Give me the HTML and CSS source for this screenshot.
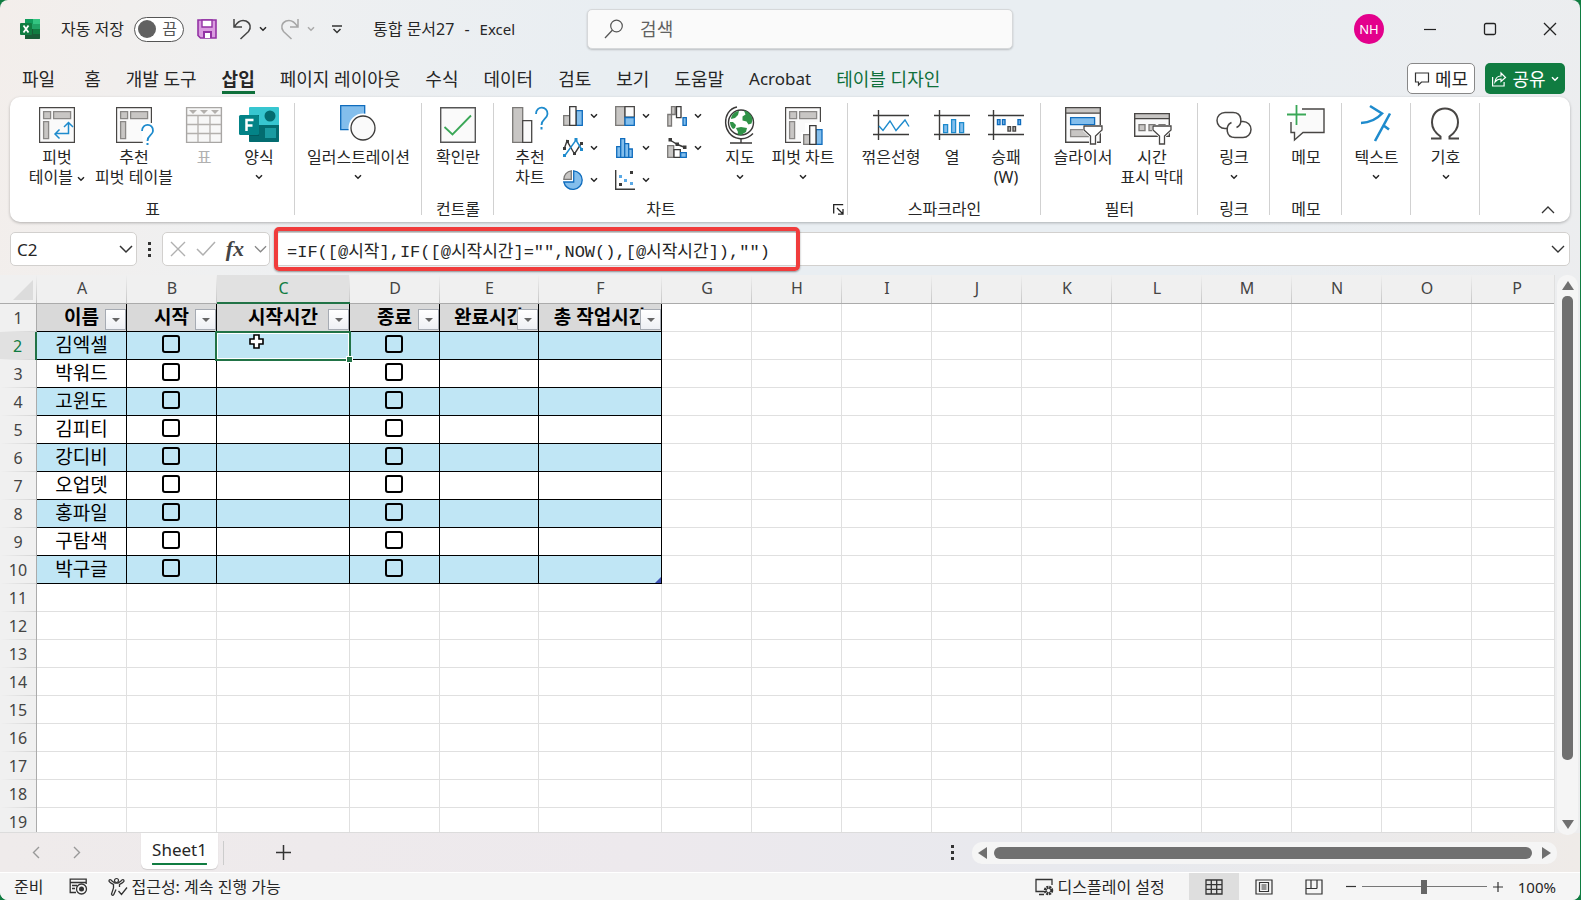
FILE: index.html
```html
<!DOCTYPE html>
<html lang="ko">
<head>
<meta charset="utf-8">
<title>통합 문서27 - Excel</title>
<link rel="stylesheet" href="styles.css">
</head>
<body>
<svg class="defs" aria-hidden="true">
  <symbol id="chev" viewBox="0 0 8 8"><path d="M1 2.2 4 5.2 7 2.2" fill="none" stroke="currentColor" stroke-width="1.5"/></symbol>
  <symbol id="pivot" viewBox="0 0 40 40">
    <path d="M2.6 2.6h34.8v34.8H2.6z" fill="#fafafa" stroke="#484644" stroke-width="1.2"/>
    <path d="M6.6 6.6h7v7h-7zM16.6 6.6h17v7h-17zM6.6 16.6h5v17h-5z" fill="#c8c6c4" stroke="#8a8886" stroke-width="1.3"/>
  </symbol>
  <symbol id="axes" viewBox="0 0 40 40"><path d="M2 10.5h36M2 29.5h36M7.5 5v30" fill="none" stroke="#3b3a39" stroke-width="1.4"/></symbol>
  <symbol id="funnel" viewBox="0 0 20 20"><path d="M1 1h18v4l-6.500 6v8h-5v-8L1 5z" fill="#fff" stroke="#fff" stroke-width="3"/><path d="M1 1h18v4l-6.500 6v8h-5v-8L1 5z" fill="#fff" stroke="#484644" stroke-width="1.300"/></symbol>
</svg>

<div class="window">
<header class="titlebar">
  <svg class="logo" viewBox="0 0 20 20" role="img" aria-label="Excel"><path d="M5 0h14a1 1 0 0 1 1 1v18a1 1 0 0 1-1 1H5z" fill="#21a366"/><path d="M5 0h8v5H5z" fill="#109c5c"/><path d="M13 0h7v5h-7z" fill="#33c481"/><path d="M5 10h8v5H5z" fill="#185c37"/><path d="M13 10h7v5h-7z" fill="#107c41"/><path d="M5 15h15v4a1 1 0 0 1-1 1H5z" fill="#185c37"/><rect x="0" y="4" width="12" height="12" rx="1" fill="#107c41"/><path d="m3.500 6.500 5 7m0-7-5 7" stroke="#fff" stroke-width="1.800"/></svg>
  <div class="autosave"><span id="as">자동 저장</span><button class="toggle" role="switch" aria-checked="false" aria-labelledby="as"><i></i>끔</button></div>
  <button class="bare save" aria-label="저장"><svg width="20" height="20" viewBox="0 0 20 20"><path d="M1 1h18v18H3.500L1 16.500z" fill="#da9be0" stroke="#9332a4" stroke-width="1.600"/><path d="M5 1h10v7H5z" fill="#fff" stroke="#9332a4" stroke-width="1.400"/><path d="M6 12h9v7H6z" fill="#9332a4"/><path d="M8 14h5v5H8z" fill="#fff"/></svg></button>
  <button class="bare undo" aria-label="실행 취소"><svg width="20" height="22" viewBox="0 0 20 22"><path d="M2 1v8h8M2.500 8.500C6 3 10 1.500 14 3c4.500 2 5.500 7 2.500 10.500L8.500 21" fill="none" stroke="#444" stroke-width="1.500"/></svg><svg class="c"><use href="#chev"/></svg></button>
  <button class="bare undo redo" aria-label="다시 실행"><svg width="20" height="22" viewBox="0 0 20 22"><path d="M18 1v8h-8M17.500 8.500C14 3 10 1.500 6 3 1.500 5 .5 10 3.500 13.500L11.500 21" fill="none" stroke="#a6a6a6" stroke-width="1.500"/></svg><svg class="c"><use href="#chev"/></svg></button>
  <button class="bare custom" aria-label="빠른 실행 도구 모음 사용자 지정"><svg width="10" height="9" viewBox="0 0 10 9"><path d="M0 1h10M1.500 4 5 7.500 8.500 4" fill="none" stroke="#333" stroke-width="1.500"/></svg></button>
  <h1 class="doc">통합 문서27<span>-</span><span class="latin">Excel</span></h1>
  <label class="search"><svg width="20" height="20" viewBox="0 0 20 20"><circle cx="12.500" cy="7" r="5.800" fill="none" stroke="#555" stroke-width="1.200"/><path d="M8.300 11.300 1 19" stroke="#555" stroke-width="1.300"/></svg><input type="text" placeholder="검색" aria-label="검색"></label>
  <div class="caption">
    <button class="bare avatar" aria-label="계정">NH</button>
    <button class="bare" aria-label="최소화"><svg width="14" height="14"><path d="M1 7.500h12" stroke="#222" stroke-width="1.200"/></svg></button>
    <button class="bare" aria-label="최대화"><svg width="14" height="14"><rect x="1.500" y="1.500" width="11" height="11" rx="1.500" fill="none" stroke="#222" stroke-width="1.300"/></svg></button>
    <button class="bare" aria-label="닫기"><svg width="14" height="14"><path d="m1 1 12 12M13 1 1 13" stroke="#222" stroke-width="1.300"/></svg></button>
  </div>
</header>

<nav class="tabs">
  <button>파일</button><button>홈</button><button>개발 도구</button><button class="on">삽입</button><button>페이지 레이아웃</button><button>수식</button><button>데이터</button><button>검토</button><button>보기</button><button>도움말</button><button class="latin">Acrobat</button><button class="ctx">테이블 디자인</button>
  <div class="share-row">
    <button class="memo"><svg width="16" height="16" viewBox="0 0 16 16"><path d="M1.500 2h13v9H7.500L4.500 14v-3h-3z" fill="none" stroke="#333" stroke-width="1.200"/></svg>메모</button>
    <button class="share"><svg width="16" height="16" viewBox="0 0 16 16"><path d="M1.600 6v9h11.500v-4M4 11c.5-4 2.500-6 6-6V2l4.500 4.500L10 10.500V8C7.500 8 5.500 9 4 11z" fill="none" stroke="#fff" stroke-width="1.200"/></svg>공유<svg class="c"><use href="#chev"/></svg></button>
  </div>
</nav>

<main class="ribbon">
  <section class="group g-table">
    <div class="tools">
      <button class="tool w68"><svg class="ico" viewBox="0 0 40 40"><use href="#pivot"/><path d="M20 28.500h12.500V18M28 22l4.500-4.500L37 22M23.500 24.500l-4.500 4.500 4.500 4.500" fill="none" stroke="#1e8bcd" stroke-width="1.500" transform="translate(-1 0)"/></svg><span>피벗<br>테이블 <svg class="c"><use href="#chev"/></svg></span></button>
      <button class="tool w86"><svg class="ico" viewBox="0 0 40 40"><use href="#pivot"/><path d="M27 18h12v22H29z" fill="#fff"/><path d="M28 26c0-8.500 11.500-8 11 0-.3 4.500-5.500 4-5.500 10" fill="none" stroke="#1e8bcd" stroke-width="1.800"/><path d="M32.500 38h2v2h-2z" fill="#1e8bcd"/></svg><span>추천<br>피벗 테이블</span></button>
      <button class="tool w54" disabled><svg class="ico" viewBox="0 0 40 40"><path d="M2.600 2.600h34.800v34.800H2.600z" fill="#f7f7f7" stroke="#a8a6a4" stroke-width="1.400"/><path d="M3 10.500h34M3 19.500h34M3 28.500h34M14 10.500V37M26 10.500V37" stroke="#b3b0ad" stroke-width="1.300"/><path d="M5 5h8l-4 4zM16 5h8l-4 4zM27 5h8l-4 4z" fill="#b3b0ad"/></svg><span>표</span></button>
      <button class="tool w56"><svg class="ico" viewBox="0 0 40 40"><path d="M11 2h28a1 1 0 0 1 1 1v33a1 1 0 0 1-1 1H11a1 1 0 0 1-1-1V3a1 1 0 0 1 1-1z" fill="#37c6d0"/><path d="M10 20h30v16a1 1 0 0 1-1 1H11a1 1 0 0 1-1-1z" fill="#036c70"/><path d="M10 10h10v21H10z" fill="#025a5e"/><circle cx="31" cy="11" r="5.500" fill="#036c70"/><path d="M26 23h11v10H26z" fill="#1a9ba1"/><rect x="0" y="10" width="20" height="20" rx="1.500" fill="#038387"/><path d="M7.500 26V15h7M7.500 20.500h6" fill="none" stroke="#fff" stroke-width="2.500"/></svg><span>양식</span><svg class="c"><use href="#chev"/></svg></button>
    </div><h2>표</h2>
  </section>
  <section class="group g-ill">
    <div class="tools mid"><button class="tool"><svg class="ico" viewBox="0 0 40 40"><path d="M2.700.7h24v24h-24z" fill="#83beec" stroke="#0f6cbd" stroke-width="1.300"/><circle cx="25" cy="23" r="14.500" fill="#fff"/><circle cx="25" cy="23" r="12" fill="#fafafa" stroke="#3b3a39" stroke-width="1.300"/></svg><span>일러스트레이션</span><svg class="c"><use href="#chev"/></svg></button></div>
  </section>
  <section class="group g-72">
    <div class="tools mid"><button class="tool"><svg class="ico" viewBox="0 0 40 40"><path d="M2.700 2.700h34.600v34.600H2.700z" fill="#fafafa" stroke="#555" stroke-width="1.400"/><path d="m6.500 22 8 7.500L33 10.500" fill="none" stroke="#3aa757" stroke-width="1.800"/></svg><span>확인란</span></button></div><h2>컨트롤</h2>
  </section>
  <section class="group g-chart">
    <div class="tools">
      <button class="tool w52"><svg class="ico" viewBox="0 0 40 40"><path d="M2.700 2.700h10v34.600h-10z" fill="#c8c6c4" stroke="#7a7876" stroke-width="1.300"/><path d="M12.700 15.700h9v21.600h-9z" fill="#fafafa" stroke="#484644" stroke-width="1.300"/><path d="M26 9c0-9 12-8 11.500 0-.3 5-6 5-6 11" fill="none" stroke="#1e8bcd" stroke-width="1.800"/><path d="M30.500 22h2v2.500h-2z" fill="#1e8bcd"/></svg><span>추천<br>차트</span></button>
      <div class="minis">
        <button class="mini" aria-label="세로 막대형 차트"><svg class="m" viewBox="0 0 20 20"><path d="M.7 9.700h6v9.600h-6z" fill="#c8c6c4" stroke="#7a7876" stroke-width="1.300"/><path d="M13.300 4.700h6v14.600h-6z" fill="#83beec" stroke="#0f6cbd" stroke-width="1.300"/><path d="M6.700.7h6.300v18.600H6.700z" fill="#fafafa" stroke="#3b3a39" stroke-width="1.300"/></svg><svg class="c"><use href="#chev"/></svg></button>
        <button class="mini" aria-label="계층 구조 차트"><svg class="m" viewBox="0 0 20 20"><path d="M.7.7h9v18.600h-9z" fill="#c8c6c4" stroke="#7a7876" stroke-width="1.300"/><path d="M10 .7h9.300v10.500H10z" fill="#fafafa" stroke="#484644" stroke-width="1.300"/><path d="M10 11.500h9.300v7.800H10z" fill="#83beec" stroke="#0f6cbd" stroke-width="1.300"/></svg><svg class="c"><use href="#chev"/></svg></button>
        <button class="mini" aria-label="폭포 차트"><svg class="m" viewBox="0 0 20 20"><path d="M.8 8.500h3.700V20H.8zM4.500.7h3.700v7.800H4.500z" fill="#c8c6c4" stroke="#7a7876" stroke-width="1.300"/><path d="M9.500.7h4.500v11H9.500z" fill="#fff" stroke="#3b3a39" stroke-width="1.300"/><path d="M16 11.700h3.300v7.600H16z" fill="#83beec" stroke="#0f6cbd" stroke-width="1.300"/></svg><svg class="c"><use href="#chev"/></svg></button>
        <button class="mini" aria-label="꺾은선형 차트"><svg class="m" viewBox="0 0 20 20"><path d="M1.500 10 4 3l7.500 13L18.500 5" fill="none" stroke="#3b3a39" stroke-width="1.400"/><path d="M1.500 18 13 2l6 10" fill="none" stroke="#1e8bcd" stroke-width="1.500"/><path d="M0 9h3v3H0zM3 2h3v3H3zM10 14h3v3h-3zM17 4h3v3h-3z" fill="#3b3a39"/><path d="M0 16h3v3H0zM11.500 0h3v3h-3zM17 10h3v3h-3z" fill="#1e8bcd"/></svg><svg class="c"><use href="#chev"/></svg></button>
        <button class="mini" aria-label="통계 차트"><svg class="m" viewBox="0 0 20 20"><path d="M1.700 8.700h4v10.600h-4zM5.700.7h4v18.600h-4zM9.700 5.700h4v13.600h-4zM13.700 11h3.600v8.300h-3.600z" fill="#83beec" stroke="#0f6cbd" stroke-width="1.300"/></svg><svg class="c"><use href="#chev"/></svg></button>
        <button class="mini" aria-label="콤보 차트"><svg class="m" viewBox="0 0 20 20"><path d="M.7 7.700h6v11.600h-6z" fill="#c8c6c4" stroke="#7a7876" stroke-width="1.300"/><path d="M7 11.700h6.300v7.600H7z" fill="#fff" stroke="#3b3a39" stroke-width="1.300"/><path d="M13.700 14.700h5.600v4.600h-5.600z" fill="#83beec" stroke="#0f6cbd" stroke-width="1.300"/><path d="m3 2 7.500 4.500L18 9.500" fill="none" stroke="#3b3a39" stroke-width="1.400"/><path d="M1.500 0h3.500v3.500H1.500zM8.500 4.500H12V8H8.500zM16 7.500h3.500V11H16z" fill="#3b3a39"/></svg><svg class="c"><use href="#chev"/></svg></button>
        <button class="mini" aria-label="원형 차트"><svg class="m" viewBox="0 0 20 20"><path d="M10.700.8A9.300 9.300 0 1 1 .8 12h9.900z" fill="#83beec" stroke="#0f6cbd" stroke-width="1.300"/><path d="M8.300.8v8.500H.8A8.500 8.500 0 0 1 8.300.8z" fill="#c8c6c4" stroke="#7a7876" stroke-width="1.300"/></svg><svg class="c"><use href="#chev"/></svg></button>
        <button class="mini" aria-label="분산형 차트"><svg class="m" viewBox="0 0 20 20"><path d="M.7 0v19.300H20" fill="none" stroke="#3b3a39" stroke-width="1.400"/><path d="M15 1h3v3h-3zM4 13h3v3H4z" fill="#3b3a39"/><path d="M4 5h3v3H4zM9 9h3v3H9zM15 12h3v3h-3z" fill="#5aa9e6"/></svg><svg class="c"><use href="#chev"/></svg></button>
      </div>
      <button class="tool w56"><svg class="ico" viewBox="0 0 40 40"><circle cx="21" cy="17.500" r="12.500" fill="#fff" stroke="#3b3a39" stroke-width="1.400"/><path d="M13 9c2-2 4-3 6-3l-1 4-3 3-4 1c0-2 1-4 2-5zM24 5.500c5 1 8 5 8.500 9l-1 4-3 1-2-3-4-1 0-4 3-2zM10 17l3 0 3 3-1 3-2 1c-2-2-3-4-3-7zM16 23l5-1 6 1-1 4-5 3c-3 0-4-1-3-3z" fill="#2f9247"/><path d="M17 2C1 5 2 31 19 33.500c5 .8 10-.8 14-5M21 33.500V38M10 38h22" fill="none" stroke="#3b3a39" stroke-width="1.400"/></svg><span>지도</span><svg class="c"><use href="#chev"/></svg></button>
      <button class="tool w70"><svg class="ico" viewBox="0 0 40 40"><use href="#pivot"/><path d="M18 27h4v-9h5v-1h13v23H18z" fill="#fff"/><path d="M20.700 29.700h6v9.600h-6z" fill="#c8c6c4" stroke="#7a7876" stroke-width="1.300"/><path d="M33 24.700h6v14.600h-6z" fill="#83beec" stroke="#0f6cbd" stroke-width="1.300"/><path d="M26.700 20.700h6.300v18.600h-6.300z" fill="#fafafa" stroke="#3b3a39" stroke-width="1.300"/></svg><span>피벗 차트</span><svg class="c"><use href="#chev"/></svg></button>
    </div><h2>차트</h2>
    <button class="bare launcher" aria-label="모든 차트 보기"><svg width="11" height="11" viewBox="0 0 11 11"><path d="M.7 9.500V.7h9.500M4 4l5.500 5.500M10 5v5.200H5" fill="none" stroke="#222" stroke-width="1.300"/></svg></button>
  </section>
  <section class="group g-spark">
    <div class="tools">
      <button class="tool w68"><svg class="ico" viewBox="0 0 40 40"><use href="#axes"/><path d="m8 21 4 4.500L19 16l6 9.500L34 15l4 6.500" fill="none" stroke="#1e8bcd" stroke-width="1.400"/></svg><span>꺾은선형</span></button>
      <button class="tool w54"><svg class="ico" viewBox="0 0 40 40"><use href="#axes"/><path d="M11.600 19.600h4v8h-4zM19.600 14.600h4v13h-4zM27.600 17.600h4v10h-4z" fill="#83beec" stroke="#1e8bcd" stroke-width="1.300"/></svg><span>열</span></button>
      <button class="tool w54"><svg class="ico" viewBox="0 0 40 40"><use href="#axes"/><path d="M11.500 14.600h2.500v5h-2.500zM16.500 14.600H19v5h-2.500zM32 14.600h2.500v5H32z" fill="#83beec" stroke="#0f6cbd" stroke-width="1.400"/><path d="M22 21.600h2.500v4.500H22zM27 21.600h2.500v4.500H27z" fill="#c8c6c4" stroke="#484644" stroke-width="1.400"/></svg><span>승패<br>(W)</span></button>
    </div><h2>스파크라인</h2>
  </section>
  <section class="group g-filter">
    <div class="tools">
      <button class="tool w70"><svg class="ico" viewBox="0 0 40 40"><path d="M2.700 2.700h34.600v34.600H2.700z" fill="#fafafa" stroke="#484644" stroke-width="1.400"/><path d="M2.700 2.700h34.600v5.500H2.700z" fill="#c8c6c4" stroke="#484644" stroke-width="1.300"/><path d="M7.600 12.600h24v7h-24z" fill="#83beec" stroke="#0f6cbd" stroke-width="1.300"/><path d="M7.600 24.600h24v7h-24z" fill="#c8c6c4" stroke="#8a8886" stroke-width="1.300"/><use href="#funnel" x="20" y="20" width="20" height="20"/></svg><span>슬라이서</span></button>
      <button class="tool w68"><svg class="ico" viewBox="0 0 40 40"><path d="M2.700 8.700h34.600v22.600H2.700z" fill="#fafafa" stroke="#484644" stroke-width="1.400"/><path d="M2.700 8.700h34.600v5H2.700z" fill="#c8c6c4" stroke="#484644" stroke-width="1.300"/><path d="M7 19.600h6v6H7zM17 19.600h6v6h-6zM27 19.600h6v6h-6z" fill="#c8c6c4" stroke="#7a7876" stroke-width="1.300"/><use href="#funnel" x="20" y="20" width="20" height="20"/></svg><span>시간<br>표시 막대</span></button>
    </div><h2>필터</h2>
  </section>
  <section class="group g-72"><div class="tools mid"><button class="tool"><svg class="ico" viewBox="0 0 40 40"><path d="M14 23.500h-3a8 8 0 0 1 0-16h8c9.500 0 10 12 3.500 15" fill="none" stroke="#484644" stroke-width="1.500"/><path d="M26 16.500h3a8 8 0 0 1 0 16h-8c-9.500 0-10-12-3.500-15" fill="none" stroke="#484644" stroke-width="1.500"/></svg><span>링크</span><svg class="c"><use href="#chev"/></svg></button></div><h2>링크</h2></section>
  <section class="group g-72"><div class="tools mid"><button class="tool"><svg class="ico" viewBox="0 0 40 40"><path d="M16 4h22v23.500H17L8.500 35v-7.500H5V17" fill="#fafafa" stroke="#484644" stroke-width="1.400"/><path d="M10.500 0v20M1 9.500h19" stroke="#fff" stroke-width="5"/><path d="M10.500 0v20M1 9.500h19" stroke="#3aa757" stroke-width="1.800"/></svg><span>메모</span></button></div><h2>메모</h2></section>
  <section class="group g-69"><div class="tools mid"><button class="tool"><svg class="ico" viewBox="0 0 40 40"><path d="m14 1 12 7.500C21 14 15 17.500 5 18M34 8.500 19 36M27 20l6 4.500" fill="none" stroke="#1e8bcd" stroke-width="2.600"/></svg><span>텍스트</span><svg class="c"><use href="#chev"/></svg></button></div></section>
  <section class="group g-69"><div class="tools mid"><button class="tool"><svg class="ico" viewBox="0 0 40 40"><path d="M5 33.500h9.500v-2C9.500 28 6 23 6 17.500 6 9 11.500 3.500 19 3.500S32 9 32 17.500C32 23 28.500 28 23.500 31.500v2H33" fill="none" stroke="#484644" stroke-width="2"/></svg><span>기호</span><svg class="c"><use href="#chev"/></svg></button></div></section>
  <button class="bare collapse" aria-label="리본 축소"><svg width="14" height="9" viewBox="0 0 14 9"><path d="m1 8 6-6 6 6" fill="none" stroke="#333" stroke-width="1.300"/></svg></button>
</main>

<section class="formula-row">
  <div class="namebox"><input type="text" value="C2" aria-label="이름 상자"><svg width="14" height="9" viewBox="0 0 14 9"><path d="m1 1 6 6 6-6" fill="none" stroke="#333" stroke-width="1.500"/></svg></div>
  <i class="dots"></i>
  <div class="fx">
    <button class="bare" aria-label="취소"><svg width="16" height="16"><path d="m1 1 14 14M15 1 1 15" stroke="#b0b0b0" stroke-width="1.400"/></svg></button>
    <button class="bare" aria-label="입력"><svg width="20" height="16"><path d="m1 8 6 6L19 1" fill="none" stroke="#b0b0b0" stroke-width="1.500"/></svg></button>
    <button class="bare fn" aria-label="함수 삽입">fx</button>
    <svg width="13" height="9" viewBox="0 0 14 9"><path d="m1 1 6 6 6-6" fill="none" stroke="#888" stroke-width="1.400"/></svg>
  </div>
  <div class="formula">
    <input type="text" aria-label="수식 입력줄" value='=IF([@시작],IF([@시작시간]="",NOW(),[@시작시간]),"")'>
    <i class="mark"></i>
    <svg width="14" height="9" viewBox="0 0 14 9"><path d="m1 1 6 6 6-6" fill="none" stroke="#333" stroke-width="1.400"/></svg>
  </div>
</section>

<section class="work">
  <div class="sheet">
    <table>
      <colgroup><col class="c-row"><col class="c-a"><col class="c-b"><col class="c-c"><col class="c-d"><col class="c-e"><col class="c-f"><col class="c-b"><col class="c-b"><col class="c-b"><col class="c-b"><col class="c-b"><col class="c-b"><col class="c-b"><col class="c-b"><col class="c-b"><col class="c-b"></colgroup>
      <thead><tr id="head"><th class="corner"></th></tr></thead>
      <tbody id="rows"></tbody>
    </table>
  </div>
  <div class="vbar"><i class="up"></i><i class="thumb"></i><i class="down"></i></div>
</section>

<section class="sheetbar">
  <div class="arrows"><svg width="8" height="13" viewBox="0 0 8 13"><path d="M7 1 1.500 6.500 7 12" fill="none" stroke="#999" stroke-width="1.400"/></svg><svg width="8" height="13" viewBox="0 0 8 13"><path d="m1 1 5.500 5.500L1 12" fill="none" stroke="#999" stroke-width="1.400"/></svg></div>
  <button class="sheettab">Sheet1</button>
  <button class="bare add" aria-label="새 시트"><svg width="15" height="15"><path d="M7.500 0v15M0 7.500h15" stroke="#333" stroke-width="1.500"/></svg></button>
  <i class="dots"></i>
  <div class="hbar"><i class="left"></i><i class="thumb"></i><i class="right"></i></div>
</section>

<footer class="status">
  <span>준비</span>
  <svg class="rec" width="19" height="17" viewBox="0 0 19 17"><path d="M7 14.500H1.200V1.200h16V6M1.200 4.500h16M3 7.500h5M3 10.500h3" fill="none" stroke="#333" stroke-width="1.300"/><circle cx="12.500" cy="11" r="5" fill="#f5f5f5" stroke="#333" stroke-width="1.300"/><circle cx="12.500" cy="11" r="2.500" fill="#333"/></svg>
  <span class="acc"><svg width="20" height="18" viewBox="0 0 20 18"><path d="M1 3c0-2 2-1.500 3 0l3 2h3l3-2c1-1.500 3-2 3 0 0 1-2 2-4.500 3.500V9M1 3c0 1 2 2 4.500 3.500V10L3.500 16c.5 2 2 1.500 2.500 0l2-4.500M10.500 13l3 3.500 5.500-7" fill="none" stroke="#333" stroke-width="1.300"/><circle cx="8.500" cy="2.500" r="2" fill="#f5f5f5" stroke="#333" stroke-width="1.200"/></svg>접근성: 계속 진행 가능</span>
  <span class="disp"><svg width="20" height="18" viewBox="0 0 20 18"><path d="M9 13.500H1V1.500h16V7M4 16.500h5" fill="none" stroke="#333" stroke-width="1.300"/><circle cx="13.500" cy="12.500" r="3.500" fill="none" stroke="#333" stroke-width="2.500" stroke-dasharray="2 .8"/><circle cx="13.500" cy="12.500" r="2.200" fill="none" stroke="#333"/></svg>디스플레이 설정</span>
  <div class="views">
    <button class="on" aria-label="기본"><svg width="18" height="16"><path d="M1 1h16v14H1zM6.300 1v14M11.700 1v14M1 5.700h16M1 10.300h16" fill="none" stroke="#333" stroke-width="1.300"/></svg></button>
    <button aria-label="페이지 레이아웃"><svg width="18" height="16"><path d="M1 1h16v14H1zM4.500 3.500h9v9h-9zM6.500 6h5M6.500 8h5M6.500 10h5" fill="none" stroke="#333" stroke-width="1.200"/></svg></button>
    <button aria-label="페이지 나누기 미리 보기"><svg width="18" height="16"><path d="M1 1h16v14H1zM6 1v8.500M12 1v8.500M1 9.500h11" fill="none" stroke="#333" stroke-width="1.200"/></svg></button>
  </div>
  <div class="zoomer"><button class="bare" aria-label="축소"><svg width="10" height="10"><path d="M0 4.500h10" stroke="#333" stroke-width="1.200"/></svg></button><input type="range" min="0" max="200" value="100" aria-label="확대/축소"><button class="bare" aria-label="확대"><svg width="10" height="10"><path d="M0 5h10M5 0v10" stroke="#333" stroke-width="1.200"/></svg></button></div>
  <span class="pct">100%</span>
</footer>
</div>
<script src="script.js"></script>
</body>
</html>
```
FILE: styles.css
```css
* { box-sizing: border-box; }
body { margin: 0; background: #107c41; font: 16px/20px "Noto Sans", "Noto Sans CJK KR", sans-serif; color: #262626; }
button, input { font: inherit; color: inherit; }
button { border: 0; background: none; padding: 0; margin: 0; }
input { border: 0; background: none; padding: 0; outline: 0; min-width: 0; }
svg { display: block; flex: none; overflow: visible; }
.defs { position: absolute; width: 0; height: 0; }
.c { width: 8px; height: 8px; }
.window { height: 100vh; margin-right: 1px; display: flex; flex-direction: column; overflow: hidden; border-radius: 8px; background: linear-gradient(100deg, #f3eeeb 0%, #eff0f1 15%, #e9eef2 35%, #e9eef2 70%, #ededee 100%); }
.bare { display: flex; align-items: center; justify-content: center; }

.titlebar { flex: none; height: 58px; display: flex; align-items: center; padding: 0 23px 0 20px; }
.logo { width: 20px; height: 20px; }
.autosave { display: flex; align-items: center; gap: 10px; margin-left: 21px; white-space: nowrap; }
.toggle { width: 50px; height: 25px; border: 1px solid #555; border-radius: 13px; background: #fff; display: flex; align-items: center; justify-content: space-between; padding: 0 6px 0 3px; color: #555; line-height: 20px; }
.toggle i { width: 18px; height: 18px; border-radius: 9px; background: #616161; }
.save { margin-left: 13px; }
.undo { margin-left: 15px; gap: 7px; }
.redo { margin-left: 13px; color: #aaa; }
.custom { margin-left: 17px; }
.doc { margin: 0 0 0 31px; font-size: 16px; font-weight: 400; display: flex; gap: 10px; white-space: nowrap; }
.doc .latin { font-size: 15px; }
.search { flex: 0 1 426px; margin-left: 72px; height: 40px; display: flex; align-items: center; gap: 16px; padding: 0 16px; background: #fafafa; border: 1px solid #d6d8da; border-radius: 5px; box-shadow: 0 1px 2px #0003; }
.search input { flex: 1; font-size: 18px; height: 30px; }
.search input::placeholder { color: #616161; opacity: 1; }
.caption { margin-left: auto; display: flex; align-items: center; gap: 46px; }
.avatar { width: 30px; height: 30px; border-radius: 15px; background: #e3008c; color: #fff; font-size: 13px; margin-right: -7px; }

.tabs { flex: none; height: 39px; display: flex; align-items: flex-start; gap: 25px; padding: 0 15px 0 22px; white-space: nowrap; }
.tabs > button { font-size: 18px; line-height: 24px; padding-top: 9px; border-bottom: 3px solid transparent; }
.tabs > button:first-child { margin-right: 4px; }
.tabs > .on { font-weight: 700; border-bottom-color: #0f703b; }
.tabs > .latin { font-size: 17px; }
.tabs > .ctx { color: #0f703b; }
.share-row { margin-left: auto; display: flex; gap: 10px; padding-top: 5px; }
.share-row button { height: 31px; border-radius: 5px; display: flex; align-items: center; justify-content: center; gap: 5px; font-size: 18px; }
.memo { width: 68px; border: 1px solid #888; background: #fff; }
.share { width: 80px; background: #107c41; color: #fff; }

.ribbon { flex: none; margin: 0 10px; padding: 3px 0; background: #fff; border-radius: 10px; box-shadow: 0 1px 3px #0004; display: flex; position: relative; }
.group { position: relative; min-height: 119px; display: flex; flex-direction: column; justify-content: space-between; }
.group::after { content: ""; position: absolute; right: 0; top: 3px; bottom: 4px; width: 1px; background: #d1d1d1; }
.group h2 { margin: 0; font-size: 16px; font-weight: 400; line-height: 20px; text-align: center; }
.tools { display: flex; align-items: flex-start; }
.mid { justify-content: center; }
.tool { padding-top: 5px; display: flex; flex-direction: column; align-items: center; text-align: center; white-space: nowrap; line-height: 20px; }
.tool > span { margin-top: 2px; }
.tool > .c { margin-top: 6px; }
.tool span .c { display: inline; }
.tool:disabled { color: #b0b0b0; }
.ico { width: 40px; height: 40px; }
.w52 { width: 52px; } .w54 { width: 54px; } .w56 { width: 56px; } .w68 { width: 68px; } .w70 { width: 70px; } .w86 { width: 86px; }
.g-table { width: 285px; } .g-table .tools { padding-left: 13px; }
.g-ill { width: 127px; }
.g-72 { width: 72px; }
.g-69 { width: 69px; }
.g-chart { width: 354px; } .g-chart .tools { padding-left: 10px; } .g-chart h2 { padding-right: 20px; }
.g-spark { width: 193px; } .g-spark .tools { padding-left: 9px; }
.g-filter { width: 157px; } .g-filter .tools { padding-left: 7px; }
.minis { display: grid; grid-template-columns: repeat(3, 52px); grid-auto-rows: 32px; }
.mini { display: flex; align-items: center; gap: 7px; padding-left: 7px; }
.m { width: 20px; height: 20px; }
.launcher { position: absolute; right: 4px; bottom: 4px; }
.collapse { position: absolute; right: 15px; bottom: 8px; }

.formula-row { flex: none; display: flex; align-items: center; padding: 10px 10px 9px; height: 53px; }
.namebox, .fx, .formula { height: 34px; background: #fff; border: 1px solid #d2d0ce; border-radius: 5px; display: flex; align-items: center; }
.namebox { width: 127px; padding: 0 3px 0 6px; }
.namebox input { flex: 1; font-size: 17px; height: 24px; }
.dots { width: 3px; height: 15px; margin: 0 11px; background: repeating-linear-gradient(#333 0 3px, transparent 3px 6px); }
.fx { width: 108px; padding: 0 2px 0 7px; justify-content: space-between; }
.fn { font: italic 700 22px/24px "Liberation Serif", serif; color: #444; }
.formula { flex: 1; position: relative; margin-left: 4px; padding: 0 4px 0 12px; }
.formula input { flex: 1; height: 26px; font: 17px/24px "Liberation Mono", "Noto Sans CJK KR", monospace; }
.mark { position: absolute; left: -1px; top: -6px; width: 526px; height: 44px; border: 4px solid #f03c3c; border-radius: 5px; box-shadow: 0 1px 2px #0006, inset 0 1px 1px #0005; pointer-events: none; }

.work { flex: 1; min-height: 0; display: flex; gap: 2px; padding-right: 2px; }
.sheet { flex: 1; min-width: 0; overflow: hidden; background: #fff; border-right: 1px solid #e0e0e0; border-bottom: 1px solid #dcdcdc; }
table { width: 100%; table-layout: fixed; border-collapse: separate; border-spacing: 0; }
.c-row { width: 37px; } .c-a, .c-b, .c-d { width: 90px; } .c-c { width: 133px; } .c-e { width: 99px; } .c-f { width: 123px; }
th, td { padding: 0; height: 28px; font-weight: 400; text-align: center; position: relative; line-height: 24px; }
thead th { height: 29px; padding-bottom: 2px; background: linear-gradient(#f0f0f0, #c6c6c6) right / 1px 100% no-repeat #f0f0f0; border-bottom: 1px solid #ababab; color: #444; }
thead .sel { background-color: #e1e1e1; color: #107c41; border-bottom: 2px solid #217346; }
tbody th { background: linear-gradient(90deg, #f0f0f0, #d4d4d4) bottom / 100% 1px no-repeat #f0f0f0; border-right: 1px solid #ababab; color: #444; }
tbody .sel { background-color: #e1e1e1; color: #107c41; border-right: 2px solid #217346; }
.corner::after { content: ""; position: absolute; right: 4px; bottom: 3px; border: 10px solid transparent; border-right-color: #dcdcdc; border-bottom-color: #dcdcdc; }
td { padding-bottom: 2px; border-right: 1px solid #e0e0e0; border-bottom: 1px solid #e0e0e0; }
.t { border-color: #000; color: #000; font-size: 19px; white-space: nowrap; }
.h { background: #d9d9d9; font-weight: 700; }
.band { background: #c0e6f5; }
.filter { position: absolute; right: 0; bottom: 1px; width: 21px; height: 21px; border: 1px solid #a6abb3; background: linear-gradient(#fff, #eef0f4); display: flex; align-items: center; justify-content: center; }
.filter::after { content: ""; border: 4px solid transparent; border-top-color: #666; border-bottom: 0; }
.check { padding: 0 2px 3px 0; }
td input { appearance: none; display: block; margin: 0 auto; width: 18px; height: 18px; border: 2px solid #000; border-radius: 3px; }
.active::before { content: ""; position: absolute; inset: -1px -2px -2px; border: 2px solid #217346; box-shadow: inset 0 0 0 1px #fff; z-index: 1; }
.active::after { content: ""; position: absolute; right: -3px; bottom: -3px; width: 5px; height: 5px; background: #217346; outline: 1px solid #fff; z-index: 2; }
.cursor { position: absolute; left: 32px; top: 2px; z-index: 3; }
.last::after { content: ""; position: absolute; right: 0; bottom: 0; border: 3px solid #3f51b5; border-top-color: transparent; border-left-color: transparent; }
.vbar { width: 21px; margin-bottom: -2px; border-radius: 10px; background: #f5f5f5; display: flex; flex-direction: column; align-items: center; padding: 6px 0; z-index: 1; }
.vbar .thumb { flex: 0 1 464px; width: 11px; border-radius: 5px; background: #707070; margin: 6px 0 auto; }
.up, .down { border: 6px solid transparent; border-bottom: 9px solid #707070; border-top: 0; }
.down { border-bottom: 0; border-top: 9px solid #707070; }

.sheetbar { flex: none; height: 39px; display: flex; align-items: center; padding-right: 23px; background: linear-gradient(90deg, #efebeb, #ede9ed 40%, #e7e9ee 72%, #efebe8); }
.arrows { display: flex; gap: 33px; width: 141px; padding-left: 32px; }
.sheettab { align-self: flex-start; height: 36px; padding: 4px 0 3px; margin-right: 5px; width: 77px; background: #fff; border-radius: 0 0 6px 6px; box-shadow: 0 1px 1px #0002; display: flex; justify-content: center; }
.sheettab { font-size: 17px; line-height: 26px; text-decoration: underline 2px #107c41; text-underline-offset: 7px; }
.add { height: 24px; border-left: 1px solid #ccc; padding-left: 52px; }
.sheetbar .dots { margin: 0 18px 0 auto; height: 15px; }
.hbar { width: 585px; height: 22px; border-radius: 10px; background: #f5f5f5; display: flex; align-items: center; justify-content: space-between; padding: 0 6px; gap: 7px; }
.hbar .thumb { flex: 1; height: 12px; border-radius: 6px; background: #707070; margin-right: 3px; }
.left, .right { border: 6px solid transparent; border-left: 0; border-right: 9px solid #707070; }
.right { border-right: 0; border-left: 9px solid #707070; }

.status { flex: none; height: 28px; display: flex; align-items: center; padding: 0 24px 0 14px; background: #f5f5f5; border-top: 1px solid #fff; white-space: nowrap; }
.rec { margin: 0 20px 0 26px; }
.acc, .disp { display: flex; align-items: center; gap: 3px; }
.disp { margin: 0 24px 0 auto; }
.views { display: flex; align-self: stretch; }
.views button { width: 50px; display: flex; align-items: center; justify-content: center; }
.views .on { background: #dedede; }
.zoomer { display: flex; align-items: center; gap: 6px; margin-left: 7px; }
.zoomer input { appearance: none; width: 125px; height: 14px; margin: 0; background: linear-gradient(#777, #777) center / 100% 1px no-repeat; }
.zoomer input::-webkit-slider-thumb { appearance: none; width: 6px; height: 14px; background: #666; }
.pct { margin-left: 15px; font-size: 15px; }
```
FILE: script.js
```js
const letters = "ABCDEFGHIJKLMNOP".split("");
const headings = ["이름", "시작", "시작시간", "종료", "완료시간", "총 작업시간"];
const names = ["김엑셀", "박워드", "고윈도", "김피티", "강디비", "오업뎃", "홍파일", "구탐색", "박구글"];
const cursor = '<svg class="cursor" width="15" height="15" viewBox="0 0 15 15"><path d="M5 1h5v4h4v5h-4v4H5v-4H1V5h4z" fill="#fff" stroke="#000" stroke-width="1.600"/></svg>';

document.getElementById("head").insertAdjacentHTML("beforeend",
  letters.map(l => `<th scope="col"${l === "C" ? ' class="sel"' : ""}>${l}</th>`).join(""));

function cell(row, col) {
  if (col > 5 || row > 10) return "<td></td>";
  if (row === 1) return `<td class="t h">${headings[col]}<button class="filter" aria-label="${headings[col]} 필터"></button></td>`;
  let cls = row % 2 ? "t" : "t band";
  let body = "";
  if (col === 0) body = names[row - 2];
  if (col === 1 || col === 3) { cls += " check"; body = `<input type="checkbox" aria-label="${names[row - 2]} ${headings[col]}">`; }
  if (row === 2 && col === 2) { cls += " active"; body = cursor; }
  if (row === 10 && col === 5) cls += " last";
  return `<td class="${cls}">${body}</td>`;
}

let html = "";
for (let r = 1; r <= 19; r++) {
  html += `<tr><th scope="row"${r === 2 ? ' class="sel"' : ""}>${r}</th>${letters.map((_, c) => cell(r, c)).join("")}</tr>`;
}
document.getElementById("rows").innerHTML = html;
```
